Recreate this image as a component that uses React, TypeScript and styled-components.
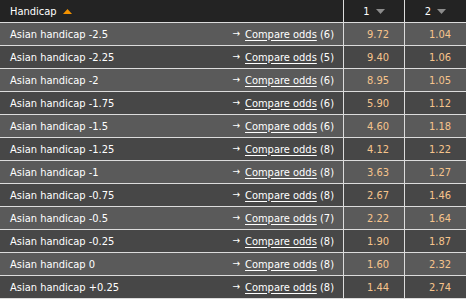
import React from "react";
import styled, { createGlobalStyle } from "styled-components";

const Global = createGlobalStyle`
  html, body { margin: 0; padding: 0; background: #dcdcdc; }
  body { font-family: "DejaVu Sans Condensed", "Liberation Sans", Arial, sans-serif; font-size: 11px; }
`;

const Table = styled.div`
  display: grid;
  grid-template-columns: 343px 60px 61px;
  grid-auto-rows: 22px;
  column-gap: 1px;
  row-gap: 1px;
  width: 466px;
  background: #dcdcdc;
  padding-bottom: 1px;
`;

const HeadCell = styled.div<{ $align?: "left" | "center" }>`
  background: #232323;
  color: #ffffff;
  display: flex;
  align-items: center;
  justify-content: ${(p) => (p.$align === "left" ? "flex-start" : "center")};
  padding-left: ${(p) => (p.$align === "left" ? "10px" : "0")};
  gap: 6px;
`;

const Cell = styled.div<{ $dark: boolean }>`
  background: ${(p) => (p.$dark ? "#474747" : "#5a5a5a")};
  color: #ffffff;
  display: flex;
  align-items: center;
`;

const NameCell = styled(Cell)`
  justify-content: space-between;
  padding: 0 9px 0 10px;
`;

const OddsCell = styled(Cell)`
  justify-content: flex-end;
  padding-right: 15px;
  color: #f6c48c;
`;

const Compare = styled.span`
  display: flex;
  align-items: center;
  gap: 5px;
`;

const Arrow = styled.span`
  font-size: 10px;
  line-height: 1;
`;

const Link = styled.a`
  color: #ffffff;
  text-decoration: underline;
  text-underline-offset: 2px;
`;

const Tri = ({ up, color }: { up?: boolean; color: string }) => (
  <svg width="9" height="5" viewBox="0 0 9 5">
    <polygon points={up ? "0,5 9,5 4.5,0" : "0,0 9,0 4.5,5"} fill={color} />
  </svg>
);

const rows: [string, number, string, string][] = [
  ["-2.5", 6, "9.72", "1.04"],
  ["-2.25", 5, "9.40", "1.06"],
  ["-2", 6, "8.95", "1.05"],
  ["-1.75", 6, "5.90", "1.12"],
  ["-1.5", 6, "4.60", "1.18"],
  ["-1.25", 8, "4.12", "1.22"],
  ["-1", 8, "3.63", "1.27"],
  ["-0.75", 8, "2.67", "1.46"],
  ["-0.5", 7, "2.22", "1.64"],
  ["-0.25", 8, "1.90", "1.87"],
  ["0", 8, "1.60", "2.32"],
  ["+0.25", 8, "1.44", "2.74"],
];

export default function App() {
  return (
    <>
      <Global />
      <Table>
        <HeadCell $align="left">
          Handicap <Tri up color="#f39200" />
        </HeadCell>
        <HeadCell>
          1 <Tri color="#8c8c8c" />
        </HeadCell>
        <HeadCell>
          2 <Tri color="#8c8c8c" />
        </HeadCell>
        {rows.map(([h, n, a, b], i) => {
          const dark = i % 2 === 1;
          return (
            <React.Fragment key={h}>
              <NameCell $dark={dark}>
                <span>Asian handicap {h}</span>
                <Compare>
                  <Arrow>→</Arrow>
                  <span>
                    <Link href="#">Compare odds</Link> ({n})
                  </span>
                </Compare>
              </NameCell>
              <OddsCell $dark={dark}>{a}</OddsCell>
              <OddsCell $dark={dark}>{b}</OddsCell>
            </React.Fragment>
          );
        })}
      </Table>
    </>
  );
}
